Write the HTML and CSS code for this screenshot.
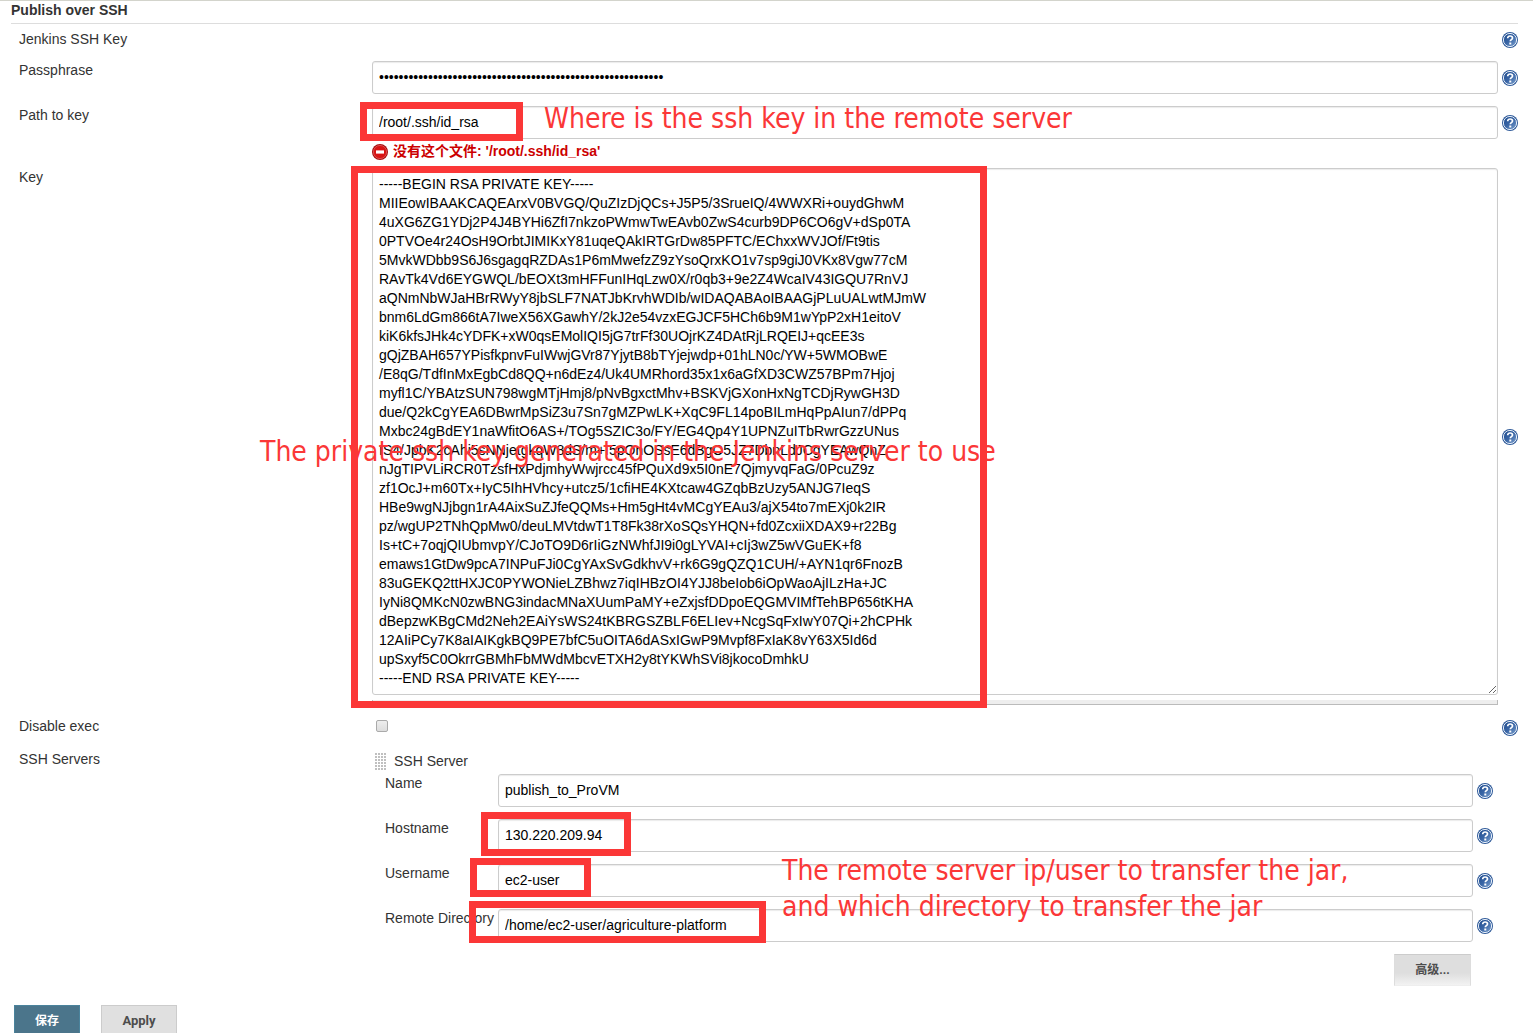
FILE: index.html
```html
<!DOCTYPE html>
<html lang="zh-CN">
<head>
<meta charset="utf-8">
<title>Publish over SSH</title>
<link rel="stylesheet" href="styles.css">
</head>
<body>
<svg class="defs" aria-hidden="true">
  <defs>
    <linearGradient id="blue" x1="0" y1="0" x2="1" y2="1">
      <stop offset="0" stop-color="#1d4a8c"/>
      <stop offset="0.5" stop-color="#3a66a6"/>
      <stop offset="1" stop-color="#7fa3d0"/>
    </linearGradient>
    <symbol id="help" viewBox="0 0 16 16">
      <circle cx="8" cy="8" r="8" fill="#2f5a99"/>
      <circle cx="8" cy="8" r="6.6" fill="url(#blue)" stroke="#e6eef8" stroke-width="1"/>
      <path d="M5.7 6.3C5.7 4.7 6.7 4 8.1 4s2.4.8 2.4 2c0 1.6-2.2 1.6-2.2 3.2" fill="none" stroke="#fff" stroke-width="1.7"/>
      <rect x="7.3" y="10.5" width="2" height="2" fill="#fff"/>
    </symbol>
  </defs>
</svg>
<form class="page">
  <h1 class="title">Publish over SSH</h1>
  <div class="rows">
    <div class="row">
      <span class="label">Jenkins SSH Key</span>
      <span></span>
      <a class="help" href="#help" aria-label="Help"><svg><use href="#help"/></svg></a>
    </div>
    <div class="row">
      <label class="label" for="passphrase">Passphrase</label>
      <input class="field" id="passphrase" type="password" value="1234567890123456789012345678901234567890123456789012345678">
      <a class="help" href="#help" aria-label="Help"><svg><use href="#help"/></svg></a>
    </div>
    <div class="row">
      <label class="label" for="path">Path to key</label>
      <input class="field" id="path" type="text" value="/root/.ssh/id_rsa">
      <a class="help" href="#help" aria-label="Help"><svg><use href="#help"/></svg></a>
      <p class="error">
        <svg class="error-icon" viewBox="0 0 16 16"><circle cx="8" cy="8" r="8" fill="#a80d0d"/><circle cx="8" cy="8" r="6.6" fill="#d81414" stroke="#e46a6a" stroke-width="0.7"/><rect x="4" y="6.4" width="8" height="3.2" fill="#fff"/></svg>
        没有这个文件: '/root/.ssh/id_rsa'
      </p>
    </div>
    <div class="row key-row">
      <label class="label" for="key">Key</label>
      <div class="key-box">
        <textarea class="field key" id="key" rows="27" wrap="off" spellcheck="false">-----BEGIN RSA PRIVATE KEY-----
MIIEowIBAAKCAQEArxV0BVGQ/QuZIzDjQCs+J5P5/3SrueIQ/4WWXRi+ouydGhwM
4uXG6ZG1YDj2P4J4BYHi6ZfI7nkzoPWmwTwEAvb0ZwS4curb9DP6CO6gV+dSp0TA
0PTVOe4r24OsH9OrbtJIMIKxY81uqeQAkIRTGrDw85PFTC/EChxxWVJOf/Ft9tis
5MvkWDbb9S6J6sgagqRZDAs1P6mMwefzZ9zYsoQrxKO1v7sp9giJ0VKx8Vgw77cM
RAvTk4Vd6EYGWQL/bEOXt3mHFFunIHqLzw0X/r0qb3+9e2Z4WcaIV43IGQU7RnVJ
aQNmNbWJaHBrRWyY8jbSLF7NATJbKrvhWDIb/wIDAQABAoIBAAGjPLuUALwtMJmW
bnm6LdGm866tA7IweX56XGawhY/2kJ2e54vzxEGJCF5HCh6b9M1wYpP2xH1eitoV
kiK6kfsJHk4cYDFK+xW0qsEMolIQI5jG7trFf30UOjrKZ4DAtRjLRQEIJ+qcEE3s
gQjZBAH657YPisfkpnvFuIWwjGVr87YjytB8bTYjejwdp+01hLN0c/YW+5WMOBwE
/E8qG/TdfInMxEgbCd8QQ+n6dEz4/Uk4UMRhord35x1x6aGfXD3CWZ57BPm7Hjoj
myfl1C/YBAtzSUN798wgMTjHmj8/pNvBgxctMhv+BSKVjGXonHxNgTCDjRywGH3D
due/Q2kCgYEA6DBwrMpSiZ3u7Sn7gMZPwLK+XqC9FL14poBILmHqPpAIun7/dPPq
Mxbc24gBdEY1naWfitO6AS+/TOg5SZIC3o/FY/EG4Qp4Y1UPNZuITbRwrGzzUNus
IS4/JpbK2cAhi5sNNjetgkqW8dS/m+I5pQnOSsE6dBgO5JZ7DbnLdJCgYEAwQnZ
nJgTIPVLiRCR0TzsfHxPdjmhyWwjrcc45fPQuXd9x5I0nE7QjmyvqFaG/0PcuZ9z
zf1OcJ+m60Tx+IyC5IhHVhcy+utcz5/1cfiHE4KXtcaw4GZqbBzUzy5ANJG7IeqS
HBe9wgNJjbgn1rA4AixSuZJfeQQMs+Hm5gHt4vMCgYEAu3/ajX54to7mEXj0k2IR
pz/wgUP2TNhQpMw0/deuLMVtdwT1T8Fk38rXoSQsYHQN+fd0ZcxiiXDAX9+r22Bg
Is+tC+7oqjQIUbmvpY/CJoTO9D6rIiGzNWhfJI9i0gLYVAI+cIj3wZ5wVGuEK+f8
emaws1GtDw9pcA7INPuFJi0CgYAxSvGdkhvV+rk6G9gQZQ1CUH/+AYN1qr6FnozB
83uGEKQ2ttHXJC0PYWONieLZBhwz7iqIHBzOI4YJJ8beIob6iOpWaoAjILzHa+JC
IyNi8QMKcN0zwBNG3indacMNaXUumPaMY+eZxjsfDDpoEQGMVIMfTehBP656tKHA
dBepzwKBgCMd2Neh2EAiYsWS24tKBRGSZBLF6ELIev+NcgSqFxIwY07Qi+2hCPHk
12AIiPCy7K8aIAIKgkBQ9PE7bfC5uOITA6dASxIGwP9Mvpf8FxIaK8vY63X5Id6d
upSxyf5C0OkrrGBMhFbMWdMbcvETXH2y8tYKWhSVi8jkocoDmhkU
-----END RSA PRIVATE KEY-----</textarea>
        <div class="grip"></div>
      </div>
      <a class="help" href="#help" aria-label="Help"><svg><use href="#help"/></svg></a>
    </div>
    <div class="row check-row">
      <label class="label" for="disable">Disable exec</label>
      <input class="check" id="disable" type="checkbox">
      <a class="help" href="#help" aria-label="Help"><svg><use href="#help"/></svg></a>
    </div>
    <div class="row">
      <span class="label">SSH Servers</span>
      <section class="server">
        <h2 class="server-title">
          <svg class="handle" viewBox="0 0 12 18"><defs><pattern id="dots" width="3" height="3" patternUnits="userSpaceOnUse"><path d="M0 1h2M1 0v2" stroke="#aaa" stroke-width="1"/></pattern></defs><rect width="12" height="18" fill="url(#dots)"/></svg>
          SSH Server
        </h2>
        <div class="server-rows">
          <div class="row server-row">
            <label class="label" for="name">Name</label>
            <input class="field" id="name" type="text" value="publish_to_ProVM">
            <a class="help" href="#help" aria-label="Help"><svg><use href="#help"/></svg></a>
          </div>
          <div class="row server-row">
            <label class="label" for="host">Hostname</label>
            <input class="field" id="host" type="text" value="130.220.209.94">
            <a class="help" href="#help" aria-label="Help"><svg><use href="#help"/></svg></a>
          </div>
          <div class="row server-row">
            <label class="label" for="user">Username</label>
            <input class="field" id="user" type="text" value="ec2-user">
            <a class="help" href="#help" aria-label="Help"><svg><use href="#help"/></svg></a>
          </div>
          <div class="row server-row">
            <label class="label" for="dir">Remote Directory</label>
            <input class="field" id="dir" type="text" value="/home/ec2-user/agriculture-platform">
            <a class="help" href="#help" aria-label="Help"><svg><use href="#help"/></svg></a>
          </div>
          <button class="button advanced" type="button">高级...</button>
        </div>
      </section>
    </div>
  </div>
  <footer class="actions">
    <button class="button primary" type="submit">保存</button>
    <button class="button" type="button">Apply</button>
  </footer>
</form>
<div class="notes">
  <div class="frame frame-path"></div>
  <div class="frame frame-key"></div>
  <div class="frame frame-host"></div>
  <div class="frame frame-user"></div>
  <div class="frame frame-dir"></div>
  <p class="note note-path">Where is the ssh key in the remote server</p>
  <p class="note note-key">The private ssh key generated in the Jenkins server to use</p>
  <p class="note note-server">The remote server ip/user to transfer the jar,<br>and which directory to transfer the jar</p>
</div>
</body>
</html>
```
FILE: styles.css
```css
* {
  box-sizing: border-box;
}

body {
  position: relative;
  margin: 0;
  border-top: 1px solid #d3d4cc;
  background: #fff;
  color: #333;
  font: 14px/19px "Liberation Sans", Arial, "Noto Sans CJK SC", sans-serif;
}

.defs {
  position: absolute;
  width: 0;
  height: 0;
}

.page {
  padding: 0 15px 0 11px;
}

.title {
  margin: 0;
  border-bottom: 1px solid #ddd;
  padding-bottom: 3px;
  font-size: 14px;
  font-weight: bold;
}

.rows {
  display: flex;
  flex-direction: column;
  gap: 12px;
  padding: 6px 0 0 8px;
}

.row {
  display: grid;
  grid-template-columns: 353px minmax(0, 1fr) 20px;
}

.label {
  white-space: nowrap;
}

.help {
  display: flex;
  align-items: center;
  justify-content: flex-end;
}

.help svg {
  width: 16px;
  height: 16px;
}

.field {
  display: block;
  width: 100%;
  height: 33px;
  margin: 0;
  border: 1px solid #ccc;
  border-radius: 3px;
  padding: 5px 6px 7px;
  background: #fff;
  box-shadow: inset 0 1px 1px rgba(0, 0, 0, 0.08);
  color: #000;
  font: inherit;
}

.error {
  grid-column: 2;
  display: flex;
  align-items: center;
  gap: 5px;
  margin: 3px 0 -5px;
  color: #c00;
  font-weight: bold;
}

.error-icon {
  width: 16px;
  height: 16px;
}

.key {
  height: auto;
  padding: 6px;
  overflow: hidden;
  white-space: pre;
  resize: vertical;
}

.grip {
  height: 5px;
  margin-top: 5px;
  border: solid #bbb;
  border-width: 0 1px 1px;
  background: #eee;
}

.check-row {
  min-height: 21px;
}

.check {
  appearance: none;
  width: 12px;
  height: 12px;
  margin: 3px 4px;
  border: 1px solid #aaa;
  border-radius: 2px;
  background: linear-gradient(#eee, #ddd);
}

.server-title {
  display: flex;
  align-items: center;
  gap: 7px;
  height: 24px;
  margin: 0;
  padding: 0 0 1px 3px;
  font-size: 14px;
  font-weight: normal;
}

.handle {
  width: 12px;
  height: 18px;
}

.server-rows {
  display: flex;
  flex-direction: column;
  gap: 12px;
  padding: 0 5px 0 13px;
}

.server-row {
  grid-template-columns: 113px minmax(0, 1fr) 20px;
}

.button {
  height: 32px;
  border: 1px solid #ccc;
  padding: 0 12px;
  background: #e0e0e0;
  color: #4d4d4d;
  font: bold 13px/30px Roboto, "Noto Sans CJK SC", sans-serif;
  white-space: nowrap;
}

.advanced {
  align-self: flex-end;
  width: 77px;
  margin-right: 22px;
  border-color: #ccc #ddd #eee;
  background: linear-gradient(#dedede 60%, #f2f2f2);
  font-size: 12px;
}

.primary {
  border-color: #4a839c;
  background: #4b758b;
  color: #fff;
}

.actions {
  display: flex;
  gap: 21px;
  height: 28px;
  margin-top: 19px;
  padding-left: 3px;
  overflow: hidden;
}

.actions .primary {
  width: 66px;
  font-size: 12px;
}

.actions .button:last-child {
  width: 76px;
}

.notes {
  position: absolute;
  top: -1px;
  left: 0;
  pointer-events: none;
}

.frame {
  position: absolute;
  border: 7px solid #fb3737;
}

.frame-path {
  top: 102px;
  left: 360px;
  width: 163px;
  height: 39px;
}

.frame-key {
  top: 166px;
  left: 351px;
  width: 636px;
  height: 542px;
}

.frame-host {
  top: 812px;
  left: 481px;
  width: 150px;
  height: 44px;
}

.frame-user {
  top: 858px;
  left: 470px;
  width: 121px;
  height: 39px;
}

.frame-dir {
  top: 901px;
  left: 469px;
  width: 297px;
  height: 42px;
}

.note {
  position: absolute;
  margin: 0;
  color: #fb3737;
  font: 28px/36px "DejaVu Sans Condensed", "Noto Sans", sans-serif;
  white-space: nowrap;
}

.note-path {
  top: 101px;
  left: 544px;
}

.note-key {
  top: 434px;
  left: 260px;
}

.note-server {
  top: 853px;
  left: 782px;
}
```
